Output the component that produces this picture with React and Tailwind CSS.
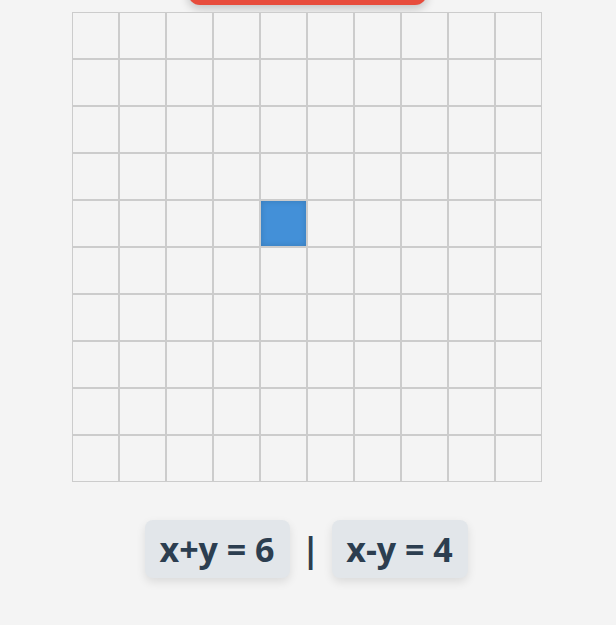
export default function App() {
  const cells = [];
  for (let r = 0; r < 10; r++) {
    for (let c = 0; c < 10; c++) {
      const active = r === 4 && c === 4;
      cells.push(
        <div
          key={`${r}-${c}`}
          className={
            active
              ? "w-[47px] h-[47px] border border-[#cccccc] bg-[#4390d8] shadow-[inset_0_0_6px_rgba(0,0,0,0.15)]"
              : "w-[47px] h-[47px] border border-[#cccccc] bg-[#f4f4f4]"
          }
        />
      );
    }
  }
  return (
    <div className="min-h-screen bg-[#f4f4f4] overflow-hidden" style={{ fontFamily: '"Open Sans", "Noto Sans", sans-serif' }}>
      <div className="flex flex-col items-center pr-[2px]">
        <div className="w-[239px] h-[44px] -mt-[39px] bg-[#e74c3c] rounded-[12px] shadow-[0_4px_10px_rgba(0,0,0,0.2)]" />
        <div className="mt-[7px] grid grid-cols-[repeat(10,47px)]">{cells}</div>
        <div className="mt-[38px] mr-[2px] flex items-center">
          <div className="h-[58px] w-[145px] flex items-center justify-center rounded-lg bg-[#e2e6ea] shadow-[0_4px_10px_rgba(0,0,0,0.1)] text-[#2c3e50] text-[34px] font-bold">
            x+y = 6
          </div>
          <div className="w-[42px] text-center text-[#2c3e50] text-[34px] font-bold">|</div>
          <div className="h-[58px] w-[136px] flex items-center justify-center rounded-lg bg-[#e2e6ea] shadow-[0_4px_10px_rgba(0,0,0,0.1)] text-[#2c3e50] text-[34px] font-bold">
            x-y = 4
          </div>
        </div>
      </div>
    </div>
  );
}
